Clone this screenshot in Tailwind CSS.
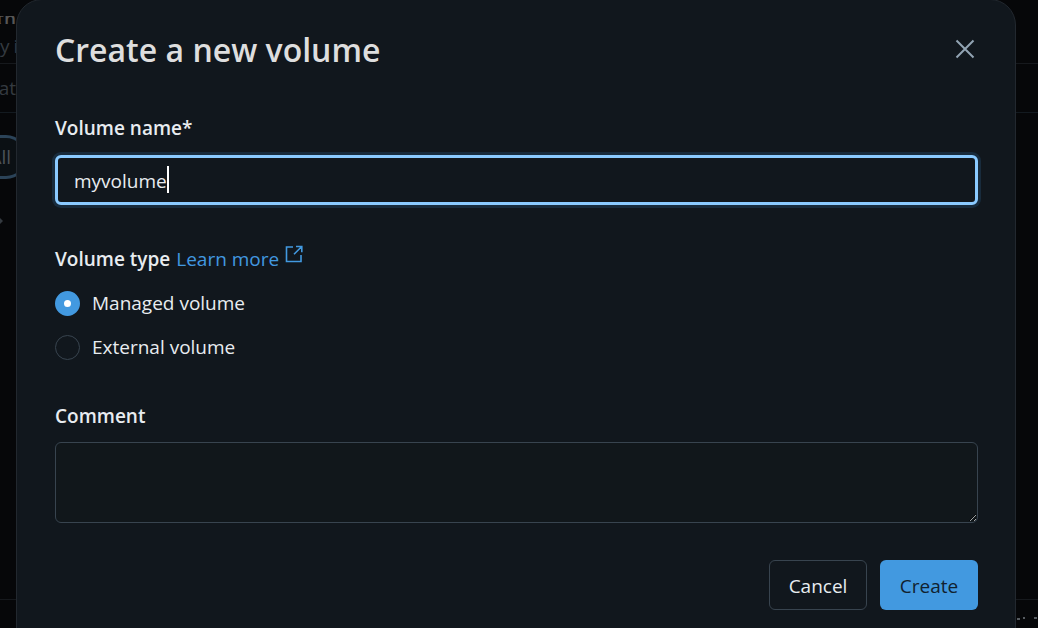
<!DOCTYPE html>
<html lang="en">
<head>
<meta charset="utf-8">
<title>Create a new volume</title>
<script src="https://cdn.jsdelivr.net/npm/@tailwindcss/browser@4"></script>
</head>
<body class="h-screen overflow-hidden bg-[#060709] font-['Open_Sans','Noto_Sans',sans-serif] text-[#e8ecf0]">
<!-- Dimmed page behind the dialog -->
<div class="flex h-full flex-col text-[19px] text-[#343a40]" aria-hidden="true">
  <div class="flex h-16 shrink-0 flex-col border-b border-[#16191d] pt-4">
    <div class="flex h-2 w-4 items-end justify-end overflow-hidden font-semibold leading-[10px] text-[#565656]">th</div>
    <div class="mt-2 flex gap-1 leading-7"><span>y</span><span>i</span></div>
  </div>
  <div class="flex h-[49px] w-full shrink-0 items-center border-b border-[#131a20]"><span class="flex w-4 justify-end">at</span></div>
  <div class="mt-[22px] flex h-11 w-7 shrink-0 items-center rounded-r-full border-y-3 border-r-3 border-[#2b4358] bg-[#0b1014]"><span class="flex w-[11px] justify-end text-[#4d5359]">All</span></div>
  <svg class="mt-9 h-3 w-4 shrink-0" viewBox="0 0 16 12"><path d="M0 3l3 3-3 3z" fill="#343a40"/></svg>
  <div class="grow"></div>
  <div class="flex h-[29px] w-full shrink-0 justify-end border-t border-[#16191d]">
    <svg class="mt-4 h-3 w-[22px]" viewBox="0 0 22 12"><path d="M1 3h3M7 2h2M18 2h3" stroke="#565b60" stroke-width="2"/></svg>
  </div>
</div>

<div class="fixed inset-x-0 top-0 pr-[22px] pl-4">
<form role="dialog" aria-labelledby="title" class="-mt-px flex min-h-[680px] flex-col rounded-[26px] border border-[#22282f] bg-[#11171d] pr-[37px] pl-[38px] text-[19px] leading-7">
  <header class="flex items-start justify-between pt-6">
    <h1 id="title" class="text-[32px] leading-[52px] font-semibold text-[#dedede]">Create a new volume</h1>
    <button type="button" aria-label="Close" class="mt-3 p-[3px] text-[#92a4b3]">
      <svg class="size-5" viewBox="0 0 20 20" fill="none" stroke="currentColor" stroke-width="2"><path d="M1.5 1.5l17 17M18.5 1.5l-17 17"/></svg>
    </button>
  </header>

  <label for="name" class="mt-[38px] font-semibold">Volume name*</label>
  <div class="relative mt-[13px]">
    <input id="name" type="text" value="myvolume" class="block h-[50px] w-full rounded-md border-3 border-[#8acaff] bg-[#11171d] px-4 pt-[2px] text-[19px] caret-transparent ring-3 ring-[#182b3c] outline-none">
    <span class="absolute top-[11px] left-[112px] h-[27px] w-[2px] bg-white"></span>
  </div>

  <fieldset class="mt-10">
    <legend class="float-left flex w-full items-center gap-[6px]">
      <span class="font-semibold">Volume type</span>
      <a href="#" class="flex gap-[6px] text-[#4299e0]">Learn more
        <svg class="size-[18px]" viewBox="0 0 18 18" fill="none" stroke="currentColor" stroke-width="1.6"><path d="M8 2H1.5v14.5H16V10M11 1.5h5.8v5.8M16.5 1.8L9 9.3"/></svg>
      </a>
    </legend>
    <div class="clear-both flex flex-col gap-4 pt-4">
      <label class="flex items-center gap-3"><input type="radio" name="type" checked class="size-[25px] appearance-none rounded-full border border-[#38444f] checked:border-9 checked:border-[#4299e0] checked:bg-white">Managed volume</label>
      <label class="flex items-center gap-3"><input type="radio" name="type" class="size-[25px] appearance-none rounded-full border border-[#38444f] checked:border-9 checked:border-[#4299e0] checked:bg-white">External volume</label>
    </div>
  </fieldset>

  <label for="comment" class="mt-[41px] font-semibold">Comment</label>
  <textarea id="comment" class="mt-3 h-[81px] w-full rounded-md border border-[#38444f] bg-[#11171b] px-4 py-2 outline-none"></textarea>

  <footer class="mt-[37px] flex justify-end gap-[13px]">
    <button type="button" class="h-[50px] w-[98px] rounded-md border border-[#38444f] pt-[2px]">Cancel</button>
    <button type="submit" class="h-[50px] w-[98px] rounded-md bg-[#4299e0] pt-[2px] text-[#11212e]">Create</button>
  </footer>
</form>
</div>
</body>
</html>
